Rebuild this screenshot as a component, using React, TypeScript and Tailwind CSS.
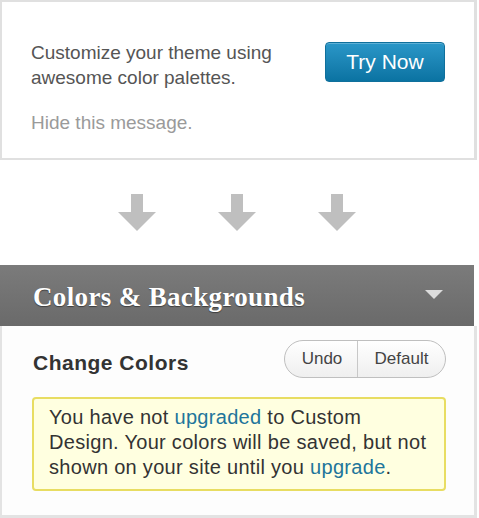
import React from "react";

function Arrow() {
  return (
    <svg width="38" height="38" viewBox="0 0 38 38" className="block">
      <rect x="13" y="0" width="12" height="19" fill="#bfbfbf" />
      <polygon points="0,18 38,18 19,37" fill="#bfbfbf" />
    </svg>
  );
}

export default function App() {
  return (
    <div className="w-[479px] h-[518px] bg-white overflow-hidden font-['Liberation_Sans',Arial,sans-serif]">
      {/* Top promo card */}
      <div className="w-[477px] h-[160px] bg-white border-t-2 border-l-2 border-b-2 border-r-[3px] border-[#e0e0e0] pl-[29px] pr-[29px] pt-[38px]">
        <div className="flex justify-between items-start">
          <div className="text-[19px] leading-[25px] text-[#555555] whitespace-nowrap">
            Customize your theme using
            <br />
            awesome color palettes.
          </div>
          <button className="mt-[2px] w-[120px] h-[40px] rounded-[4px] border border-[#10709c] bg-gradient-to-b from-[#2a97c8] to-[#0a73a2] text-white text-[21px] leading-[38px] text-center shadow-[inset_0_1px_0_rgba(255,255,255,0.25)]">
            Try Now
          </button>
        </div>
        <div className="mt-[20px] text-[19px] leading-[25px] text-[#9a9a9a]">
          Hide this message.
        </div>
      </div>

      {/* Arrows */}
      <div className="h-[105px] pt-[34px] pl-[118px] flex gap-[62px] items-start">
        <Arrow />
        <Arrow />
        <Arrow />
      </div>

      {/* Header bar */}
      <div className="w-[474px] h-[61px] bg-gradient-to-b from-[#7b7b7b] to-[#6a6a6a] flex items-center justify-between pl-[33px] pr-[31px]">
        <div className="font-['Liberation_Serif',Georgia,serif] font-bold text-[27px] leading-[30px] text-white tracking-[0.35px] [text-shadow:0_1px_1px_rgba(0,0,0,0.45)] pt-[2px]">
          Colors &amp; Backgrounds
        </div>
        <svg width="18" height="9" viewBox="0 0 18 9" className="block mt-[-2px]">
          <polygon points="0,0 18,0 9,9" fill="#dcdcdc" />
        </svg>
      </div>

      {/* Panel */}
      <div className="w-[477px] h-[192px] bg-[#fdfdfd] border-l-2 border-r-[3px] border-b-[3px] border-[#e3e3e3]">
        <div className="flex justify-between items-start pt-[14px] pl-[31px] pr-[28px]">
          <div className="mt-[11px] text-[21px] leading-[24px] font-bold text-[#333333] tracking-[0.5px]">
            Change Colors
          </div>
          <div className="flex h-[38px] rounded-full border border-[#bfbfbf] bg-gradient-to-b from-[#ffffff] to-[#efefef] overflow-hidden text-[17px] text-[#444444]">
            <div className="w-[73px] flex items-center justify-center border-r border-[#c8c8c8] pl-[2px]">
              Undo
            </div>
            <div className="w-[87px] flex items-center justify-center">
              Default
            </div>
          </div>
        </div>
        <div className="ml-[30px] mt-[19px] w-[414px] h-[94px] rounded-[4px] border-2 border-[#e8dd62] bg-[#ffffe0] pl-[15px] pt-[6px] text-[20px] leading-[25px] tracking-[0.3px] text-[#333333] whitespace-nowrap">
          You have not <span className="text-[#21759b]">upgraded</span> to Custom
          <br />
          Design. Your colors will be saved, but not
          <br />
          shown on your site until you <span className="text-[#21759b]">upgrade</span>.
        </div>
      </div>
    </div>
  );
}
